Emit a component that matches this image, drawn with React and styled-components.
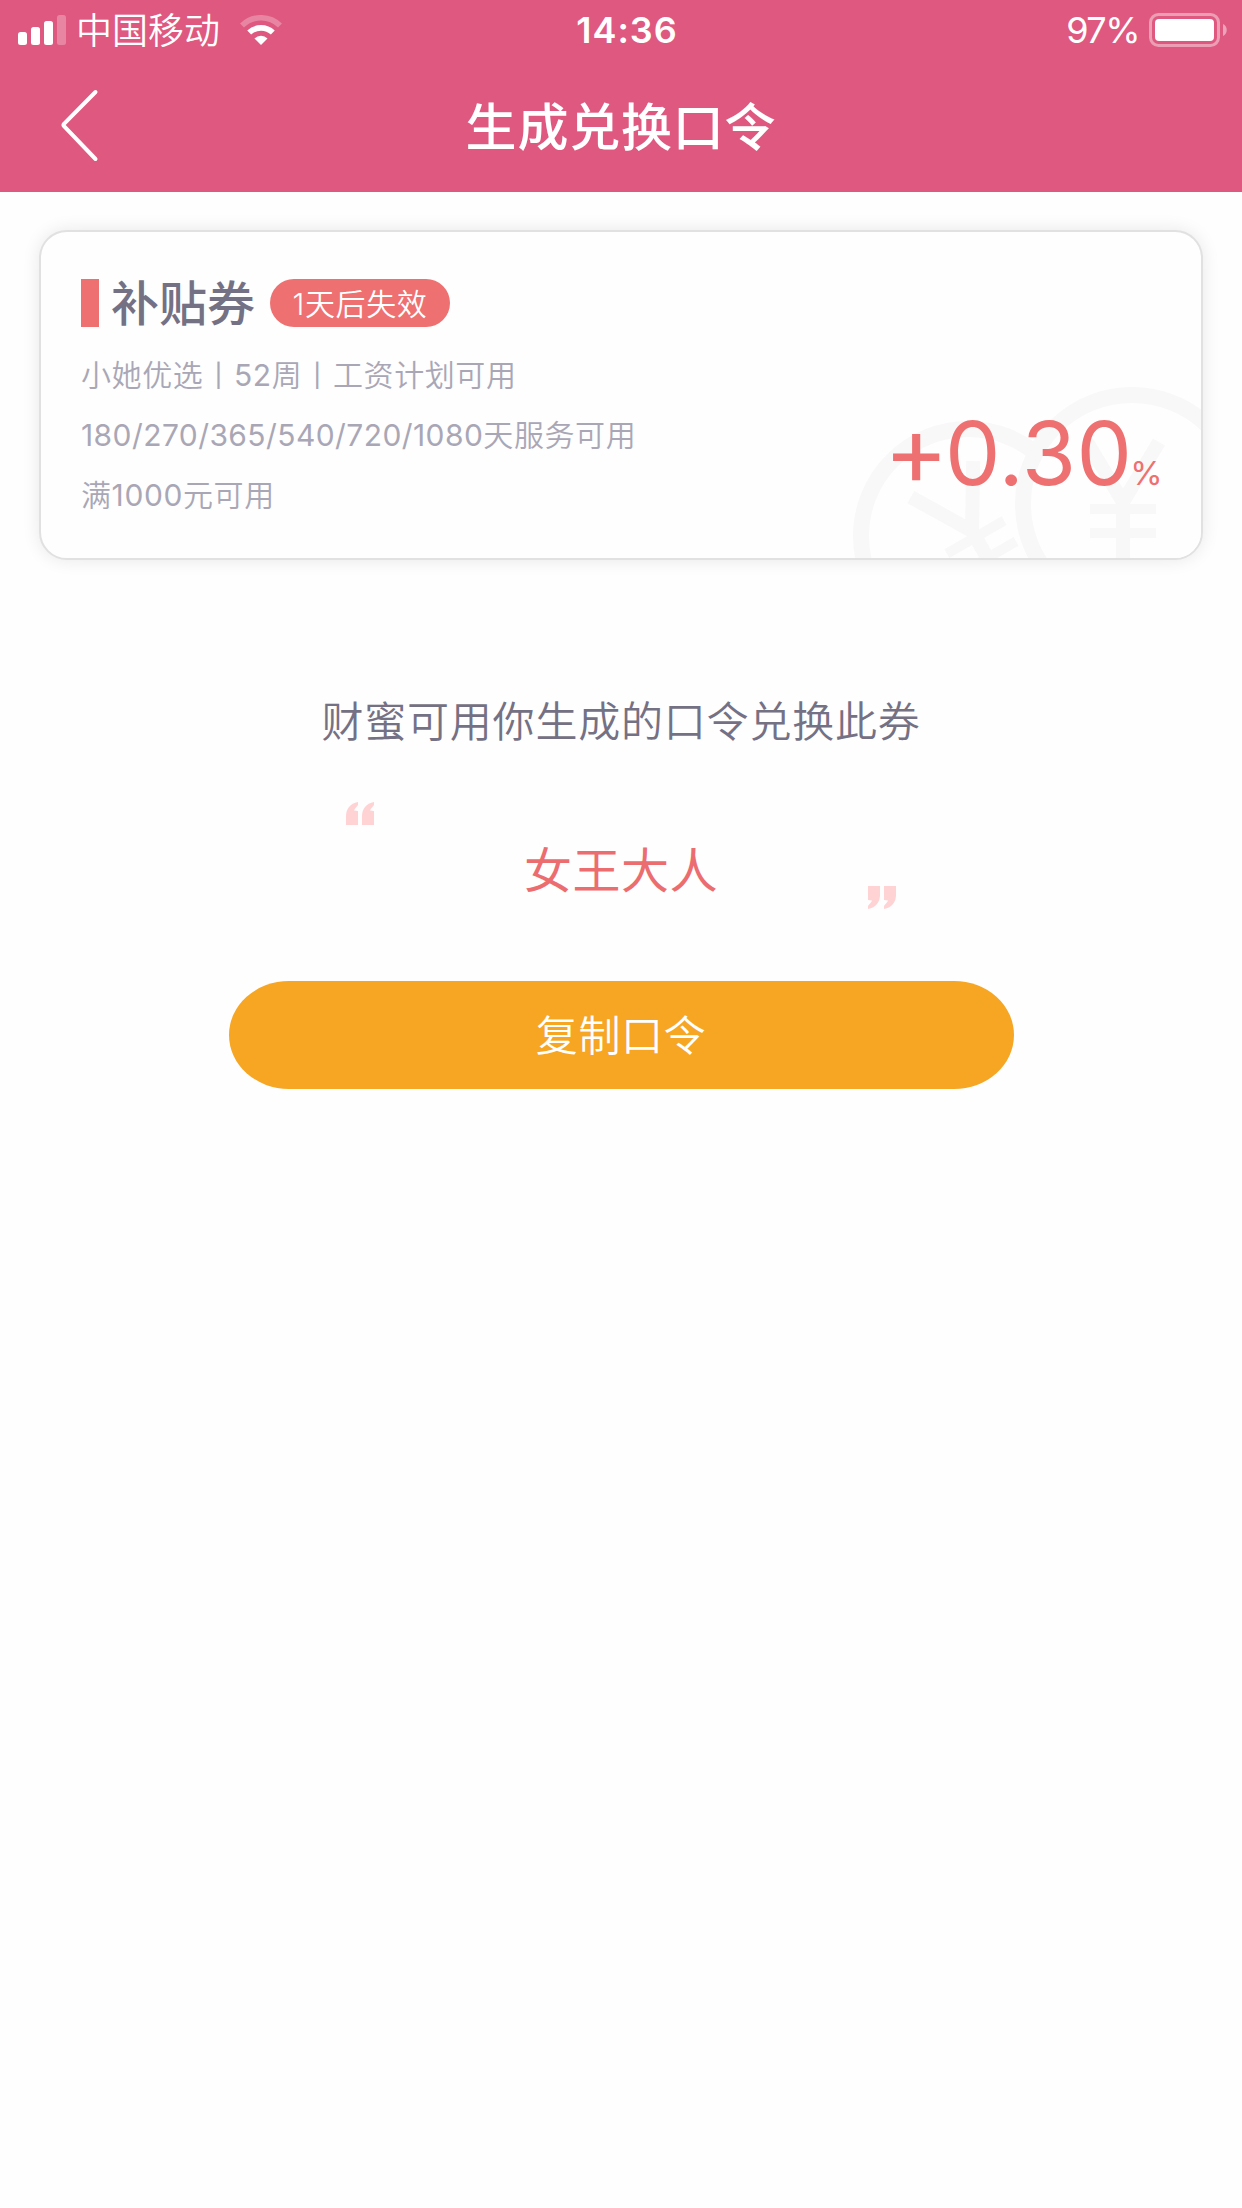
import React from 'react';
import styled, { createGlobalStyle } from 'styled-components';

const Global = createGlobalStyle`
  * { box-sizing: border-box; }
  body {
    margin: 0;
    background: #fefefe;
    font-family: Inter, "Noto Sans CJK SC", sans-serif;
  }
`;

const Page = styled.div`
  width: 1242px;
  height: 2208px;
  overflow: hidden;
  background: #fefefe;
`;

const Header = styled.header`
  height: 192px;
  background: #df5880;
  color: #fff;
`;

const StatusBar = styled.div`
  display: grid;
  grid-template-columns: 1fr auto 1fr;
  align-items: center;
  height: 60px;
  padding: 0 15px 0 18px;
  font-size: 36px;
  line-height: 60px;
`;

const StatusGroup = styled.div`
  display: flex;
  align-items: center;
  height: 60px;
  justify-content: ${(p) => (p.$end ? 'flex-end' : 'flex-start')};
`;

const Carrier = styled.span`
  margin: 2px 20px 0 9px;
  font-weight: 350;
`;

const Clock = styled.span`
  padding-left: 9px;
  font-weight: 600;
  letter-spacing: 1px;
`;

const Percent = styled.span`
  margin: 0 10px 0 0;
  letter-spacing: -1.5px;
`;

const NavBar = styled.div`
  display: grid;
  grid-template-columns: 120px 1fr 120px;
  align-items: center;
  height: 132px;
`;

const BackButton = styled.button`
  display: flex;
  align-items: center;
  height: 130px;
  padding: 0 0 0 60px;
  border: 0;
  background: none;
`;

const PageTitle = styled.h1`
  margin: 4px 0 0;
  text-align: center;
  font-size: 51px;
  font-weight: 500;
  line-height: 74px;
  letter-spacing: 0.8px;
`;

const Card = styled.section`
  position: relative;
  display: flex;
  justify-content: space-between;
  width: 1164px;
  height: 330px;
  margin: 38px 39px 0;
  padding: 47px 38px 0 40px;
  border: 2px solid #e1e1e2;
  border-radius: 28px;
  background: #fefefe;
  box-shadow: 0 0 18px rgba(0, 0, 0, 0.09);
  overflow: hidden;
`;

const Watermark = styled.svg`
  position: absolute;
  right: 0;
  bottom: 0;
`;

const CouponInfo = styled.div`
  display: flex;
  flex-direction: column;
`;

const CouponHead = styled.div`
  display: flex;
  align-items: center;
  height: 48px;
  margin-bottom: 18px;
`;

const Marker = styled.i`
  width: 18px;
  height: 48px;
  background: #ee7070;
`;

const CouponName = styled.h2`
  margin: 2px 15px 0 12px;
  color: #757185;
  font-size: 48px;
  font-weight: 500;
  line-height: 48px;
`;

const Badge = styled.span`
  width: 180px;
  height: 48px;
  border-radius: 24px;
  background: #ee7070;
  color: #fff;
  font-size: 30px;
  font-weight: 350;
  line-height: 50px;
  letter-spacing: 0.6px;
  text-align: center;
`;

const Rule = styled.p`
  margin: 0;
  color: #a9a7b6;
  font-size: 30px;
  font-weight: 350;
  line-height: 60px;
  letter-spacing: 0.6px;
  white-space: nowrap;
`;

const Digits = styled.span`
  font-weight: 400;
  letter-spacing: ${(p) => (p.$tight ? '0.42px' : 'inherit')};
`;

const Amount = styled.div`
  position: relative;
  display: flex;
  align-items: baseline;
  height: 120px;
  margin-top: 111px;
  color: #ee7070;
  font-size: 88px;
  line-height: 120px;
  letter-spacing: 0.3px;
`;

const Plus = styled.span`
  margin-right: -4px;
  font-size: 98px;
  font-feature-settings: "calt" 0;
`;

const Unit = styled.span`
  margin-left: -2px;
  font-size: 33px;
`;

const Share = styled.main`
  display: flex;
  flex-direction: column;
  align-items: center;
  padding-top: 130px;
`;

const Hint = styled.p`
  margin: 0;
  color: #757185;
  font-size: 42px;
  font-weight: 350;
  line-height: 64px;
  letter-spacing: 0.8px;
`;

const Phrase = styled.div`
  display: flex;
  justify-content: space-between;
  width: 550px;
  height: 107px;
  margin: 48px 0 72px;
`;

const PhraseText = styled.strong`
  align-self: center;
  padding-top: 31px;
  color: #ec6d6f;
  font-size: 48px;
  font-weight: 400;
  line-height: 60px;
  letter-spacing: 0.5px;
`;

const Quote = styled.svg`
  align-self: ${(p) => (p.$closing ? 'flex-end' : 'flex-start')};
`;

const CopyButton = styled.button`
  width: 785px;
  height: 108px;
  padding: 2px 0 0;
  border: 0;
  border-radius: 60px / 54px;
  background: #f6a623;
  color: #fff;
  font-family: inherit;
  font-size: 42px;
  font-weight: 350;
  line-height: 106px;
  letter-spacing: 0.6px;
`;

const Signal = () => (
  <svg width="49" height="30" viewBox="0 0 49 30" fill="#fff">
    <rect x="0" y="17" width="9" height="13" rx="2.5" />
    <rect x="13" y="12" width="9" height="18" rx="2.5" />
    <rect x="26" y="6" width="9" height="24" rx="2.5" />
    <rect x="39" y="0" width="9" height="30" rx="2.5" opacity="0.27" />
  </svg>
);

const Wifi = () => (
  <svg width="42" height="30" viewBox="0 0 42 30" fill="none" stroke="#fff">
    <path d="M2 10.6A27 27 0 0 1 40 10.6" strokeWidth="5.6" opacity="0.27" />
    <path d="M9.2 17.6A17 17 0 0 1 32.8 17.6" strokeWidth="5.6" />
    <path d="M14.5 23.5A9.3 9.3 0 0 1 27.5 23.5L21 30Z" fill="#fff" stroke="none" />
  </svg>
);

const Battery = () => (
  <svg width="78" height="34" viewBox="0 0 78 34">
    <rect x="1.5" y="1.5" width="68" height="31" rx="8" fill="none" stroke="#fff" strokeWidth="3" opacity="0.42" />
    <rect x="6" y="6" width="59" height="22" rx="4" fill="#fff" />
    <path d="M74 11C79 13 79 21 74 23Z" fill="#fff" opacity="0.45" />
  </svg>
);

const Yen = ({ transform }) => (
  <g transform={transform}>
    <path d="M-36 -60L0 0L36 -60M0 -2V75" strokeWidth="14" />
    <path d="M-33 7H33M-33 31H33" strokeWidth="10" />
  </g>
);

const Coins = () => (
  <Watermark width="360" height="180" viewBox="841 378 360 180" fill="none" stroke="#f8f8f8">
    <circle cx="968" cy="536" r="107" strokeWidth="16" />
    <Yen transform="translate(972 531) rotate(-30)" />
    <circle cx="1132" cy="504" r="109" strokeWidth="16" fill="#fefefe" />
    <Yen transform="translate(1123 502)" />
  </Watermark>
);

const QuoteMark = ({ closing }) => (
  <Quote $closing={closing} width="28" height="23" viewBox="0 0 28 23" fill="#ffd3d4">
    <g transform={closing ? 'rotate(180 14 11.5)' : undefined}>
      <path d="M0 23V14C0 7 4 1.5 12 0V3C11 5 9 6 8 8.5L12 9V23Z" />
      <path d="M16 23V14C16 7 20 1.5 28 0V3C27 5 25 6 24 8.5L28 9V23Z" />
    </g>
  </Quote>
);

export default function App() {
  return (
    <Page lang="zh-CN">
      <Global />
      <Header>
        <StatusBar>
          <StatusGroup>
            <Signal />
            <Carrier>中国移动</Carrier>
            <Wifi />
          </StatusGroup>
          <Clock>14:36</Clock>
          <StatusGroup $end>
            <Percent>97%</Percent>
            <Battery />
          </StatusGroup>
        </StatusBar>
        <NavBar>
          <BackButton aria-label="返回">
            <svg width="40" height="74" viewBox="0 0 40 74" fill="none" stroke="#fff" strokeWidth="4" strokeLinecap="round" strokeLinejoin="round">
              <path d="M35.5 3L4 34.8Q3 36 4 37.2L35.5 70" />
            </svg>
          </BackButton>
          <PageTitle>生成兑换口令</PageTitle>
        </NavBar>
      </Header>
      <Card>
        <Coins />
        <CouponInfo>
          <CouponHead>
            <Marker />
            <CouponName>补贴券</CouponName>
            <Badge>1天后失效</Badge>
          </CouponHead>
          <Rule>小她优选丨<Digits>52</Digits>周丨工资计划可用</Rule>
          <Rule><Digits $tight>180/270/365/540/720/1080</Digits>天服务可用</Rule>
          <Rule>满<Digits>1000</Digits>元可用</Rule>
        </CouponInfo>
        <Amount>
          <Plus>+</Plus>0.30<Unit>%</Unit>
        </Amount>
      </Card>
      <Share>
        <Hint>财蜜可用你生成的口令兑换此券</Hint>
        <Phrase>
          <QuoteMark />
          <PhraseText>女王大人</PhraseText>
          <QuoteMark closing />
        </Phrase>
        <CopyButton>复制口令</CopyButton>
      </Share>
    </Page>
  );
}
